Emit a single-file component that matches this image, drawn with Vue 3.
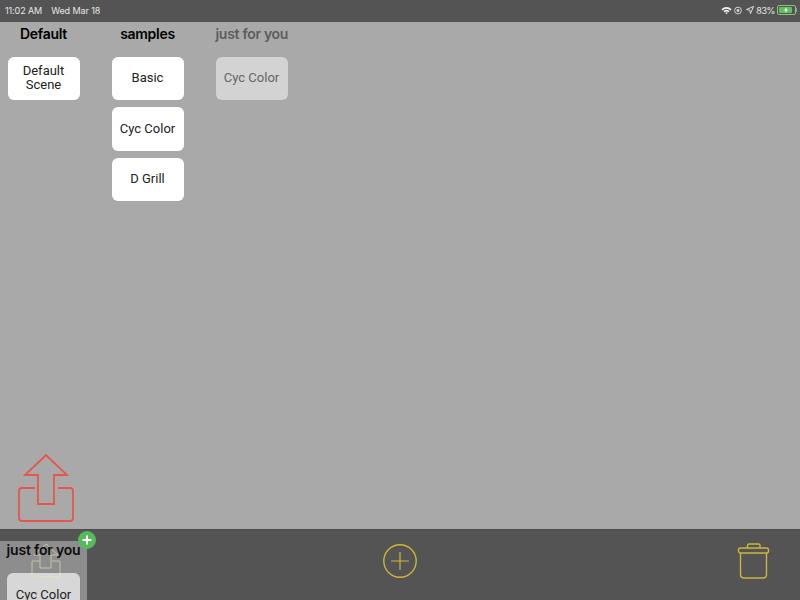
<script setup>
const columns = [
  { title: 'Default', items: ['Default Scene'] },
  { title: 'samples', items: ['Basic', 'Cyc Color', 'D Grill'] },
  { title: 'just for you', items: ['Cyc Color'], dim: true }
]
</script>

<template>
  <div class="screen">
    <header class="status">
      <div class="status-left"><span>11:02 AM</span><span>Wed Mar 18</span></div>
      <div class="status-right">
        <svg width="11" height="9" viewBox="0 0 12 9" class="wifi">
          <path d="M0.5 3 A8 8 0 0 1 11.5 3 L10.2 4.4 A6 6 0 0 0 1.8 4.4 Z" fill="#f2f2f2"/>
          <path d="M2.7 5.2 A5 5 0 0 1 9.3 5.2 L8.1 6.4 A3.2 3.2 0 0 0 3.9 6.4 Z" fill="#f2f2f2"/>
          <path d="M4.7 7.1 A2 2 0 0 1 7.3 7.1 L6 8.6 Z" fill="#f2f2f2"/>
        </svg>
        <svg width="8" height="9" viewBox="0 0 9 9" class="lock">
          <circle cx="4.5" cy="4.5" r="3.8" fill="none" stroke="#e0e0e0" stroke-width="1"/>
          <rect x="3" y="3" width="3" height="3" rx=".6" fill="#e0e0e0"/>
        </svg>
        <svg width="8" height="8" viewBox="0 0 9 9" class="loc">
          <path d="M8.5 .5 L.5 4 L4.3 4.7 L5 8.5 Z" fill="none" stroke="#f2f2f2" stroke-width="1"/>
        </svg>
        <span class="pct">83%</span>
        <div class="battery"><div class="battery-fill"><svg width="6" height="6" viewBox="0 0 6 7"><path d="M3.6 0 L.8 3.9 H2.6 L2.2 7 L5.2 2.9 H3.3 Z" fill="#fff"/></svg></div></div>
        <div class="nub"></div>
      </div>
    </header>

    <main class="board">
      <section v-for="col in columns" :key="col.title" class="column" :class="{ dim: col.dim }">
        <h2>{{ col.title }}</h2>
        <div class="cards">
          <div v-for="item in col.items" :key="item" class="card">{{ item }}</div>
        </div>
      </section>
    </main>

    <footer class="toolbar">
      <svg width="34" height="34" viewBox="0 0 34 34" class="tool-add">
        <circle cx="17" cy="17" r="16.2" fill="none" stroke="#cdb63a" stroke-width="1.4"/>
        <path d="M8 17 H26 M17 8 V26" stroke="#cdb63a" stroke-width="1.2"/>
      </svg>
      <svg width="33" height="36" viewBox="0 0 33 36" class="tool-trash">
        <path d="M10.5 5 V2.5 Q10.5 1 12 1 H21.5 Q23 1 23 2.500 V5" fill="none" stroke="#cdb63a" stroke-width="1.4"/>
        <rect x="1.5" y="5" width="30" height="5" rx="2" fill="none" stroke="#cdb63a" stroke-width="1.4"/>
        <path d="M3.5 10 V31.5 Q3.5 35 7 35 H26 Q29.5 35 29.5 31.5 V10" fill="none" stroke="#cdb63a" stroke-width="1.4"/>
      </svg>
    </footer>

    <svg class="upload" width="57" height="69" viewBox="0 0 57 69">
      <path d="M17 34 H4 Q1 34 1 37 V64 Q1 67 4 67 H52 Q55 67 55 64 V37 Q55 34 52 34 H40" fill="none" stroke="#e5574a" stroke-width="1.8"/>
      <path d="M28 1 L7 21 H20 V50 H36 V21 H49 Z" fill="none" stroke="#e5574a" stroke-width="1.8"/>
    </svg>

    <div class="ghost">
      <div class="ghost-card">Cyc Color</div>
      <svg class="ghost-icon" width="30" height="36" viewBox="0 0 30 36">
        <path d="M8.5 18 H2 Q1 18 1 19 V33 Q1 34 2 34 H28 Q29 34 29 33 V19 Q29 18 28 18 H20.5" fill="none" stroke="#efe8b0" stroke-width="1"/>
        <path d="M15 1 L3 12 H9 V25 H20 V12 H27 Z" fill="none" stroke="#efe8b0" stroke-width="1"/>
      </svg>
      <div class="ghost-title">just for you</div>
      <div class="badge">
        <svg width="12" height="12" viewBox="0 0 12 12"><path d="M1.5 6 H10.5 M6 1.5 V10.5" stroke="#fff" stroke-width="2"/></svg>
      </div>
    </div>
  </div>
</template>

<style>
html, body { margin: 0; padding: 0; }
</style>

<style scoped>
.screen {
  position: relative;
  width: 800px;
  height: 600px;
  overflow: hidden;
  display: flex;
  flex-direction: column;
  background: #a9a9a9;
  font-family: Inter, "Liberation Sans", sans-serif;
}
.status {
  height: 22px;
  flex: none;
  background: #545454;
  display: flex;
  justify-content: space-between;
  align-items: center;
  padding: 0 3px 2px 5px;
  box-sizing: border-box;
  color: #e6e6e6;
  font-size: 9px;
  letter-spacing: -0.1px;
}
.status-left { display: flex; gap: 9px; }
.status-right { display: flex; align-items: center; }
.lock { margin-left: 2px; }
.loc { margin-left: 4px; }
.pct { margin-left: 2px; letter-spacing: -0.4px; }
.battery {
  margin-left: 2px;
  width: 15px;
  height: 6px;
  border: 1px solid #8fbf84;
  border-radius: 2px;
  padding: 1px;
  box-sizing: content-box;
}
.battery-fill {
  width: 13px;
  height: 6px;
  background: #5cc35c;
  border-radius: 1px;
  display: flex;
  justify-content: center;
}
.nub { width: 1px; height: 4px; background: #999; }
.board {
  flex: 1;
  display: flex;
  gap: 32px;
  padding: 0 7.5px;
}
.column { width: 72px; }
.column h2 {
  margin: 0;
  height: 34.5px;
  line-height: 24px;
  font-size: 14px;
  font-weight: 600;
  letter-spacing: -0.3px;
  text-align: center;
  white-space: nowrap;
  color: #000;
}
.cards { display: flex; flex-direction: column; gap: 7px; }
.card {
  height: 43.5px;
  background: #fff;
  border-radius: 6px;
  display: flex;
  align-items: center;
  justify-content: center;
  text-align: center;
  font-family: Roboto, "Liberation Sans", sans-serif;
  font-size: 13px;
  line-height: 14.5px;
  color: #222;
  padding: 0 4px;
  box-sizing: border-box;
}
.dim h2 { color: #5c5c5c; }
.dim .card { background: #d3d3d3; color: #666; }
.toolbar {
  height: 71px;
  flex: none;
  background: #545454;
  border-top: 1px solid #4c4c4c;
  box-sizing: border-box;
  position: relative;
}
.tool-add { position: absolute; left: 383px; top: 14px; }
.tool-trash { position: absolute; left: 737px; top: 13px; }
.upload { position: absolute; left: 18px; top: 454px; }
.ghost {
  position: absolute;
  left: 0;
  top: 541px;
  width: 87px;
  height: 59px;
  background: #8d8d8d;
}
.ghost-title {
  position: relative;
  font-size: 14px;
  font-weight: 600;
  letter-spacing: -0.2px;
  color: #0d0d0d;
  text-align: center;
  line-height: 18px;
  white-space: nowrap;
}
.ghost-icon { position: absolute; left: 31px; top: 2px; opacity: .6; }
.ghost-card {
  position: absolute;
  left: 7px;
  top: 32px;
  width: 73px;
  height: 43.5px;
  background: #d7d7d7;
  border-radius: 6px;
  font-family: Roboto, "Liberation Sans", sans-serif;
  font-size: 13px;
  color: #222;
  display: flex;
  align-items: center;
  justify-content: center;
}
.badge {
  position: absolute;
  left: 78px;
  top: -10px;
  width: 18px;
  height: 18px;
  border-radius: 50%;
  background: #55bb5a;
  display: flex;
  align-items: center;
  justify-content: center;
}
</style>
